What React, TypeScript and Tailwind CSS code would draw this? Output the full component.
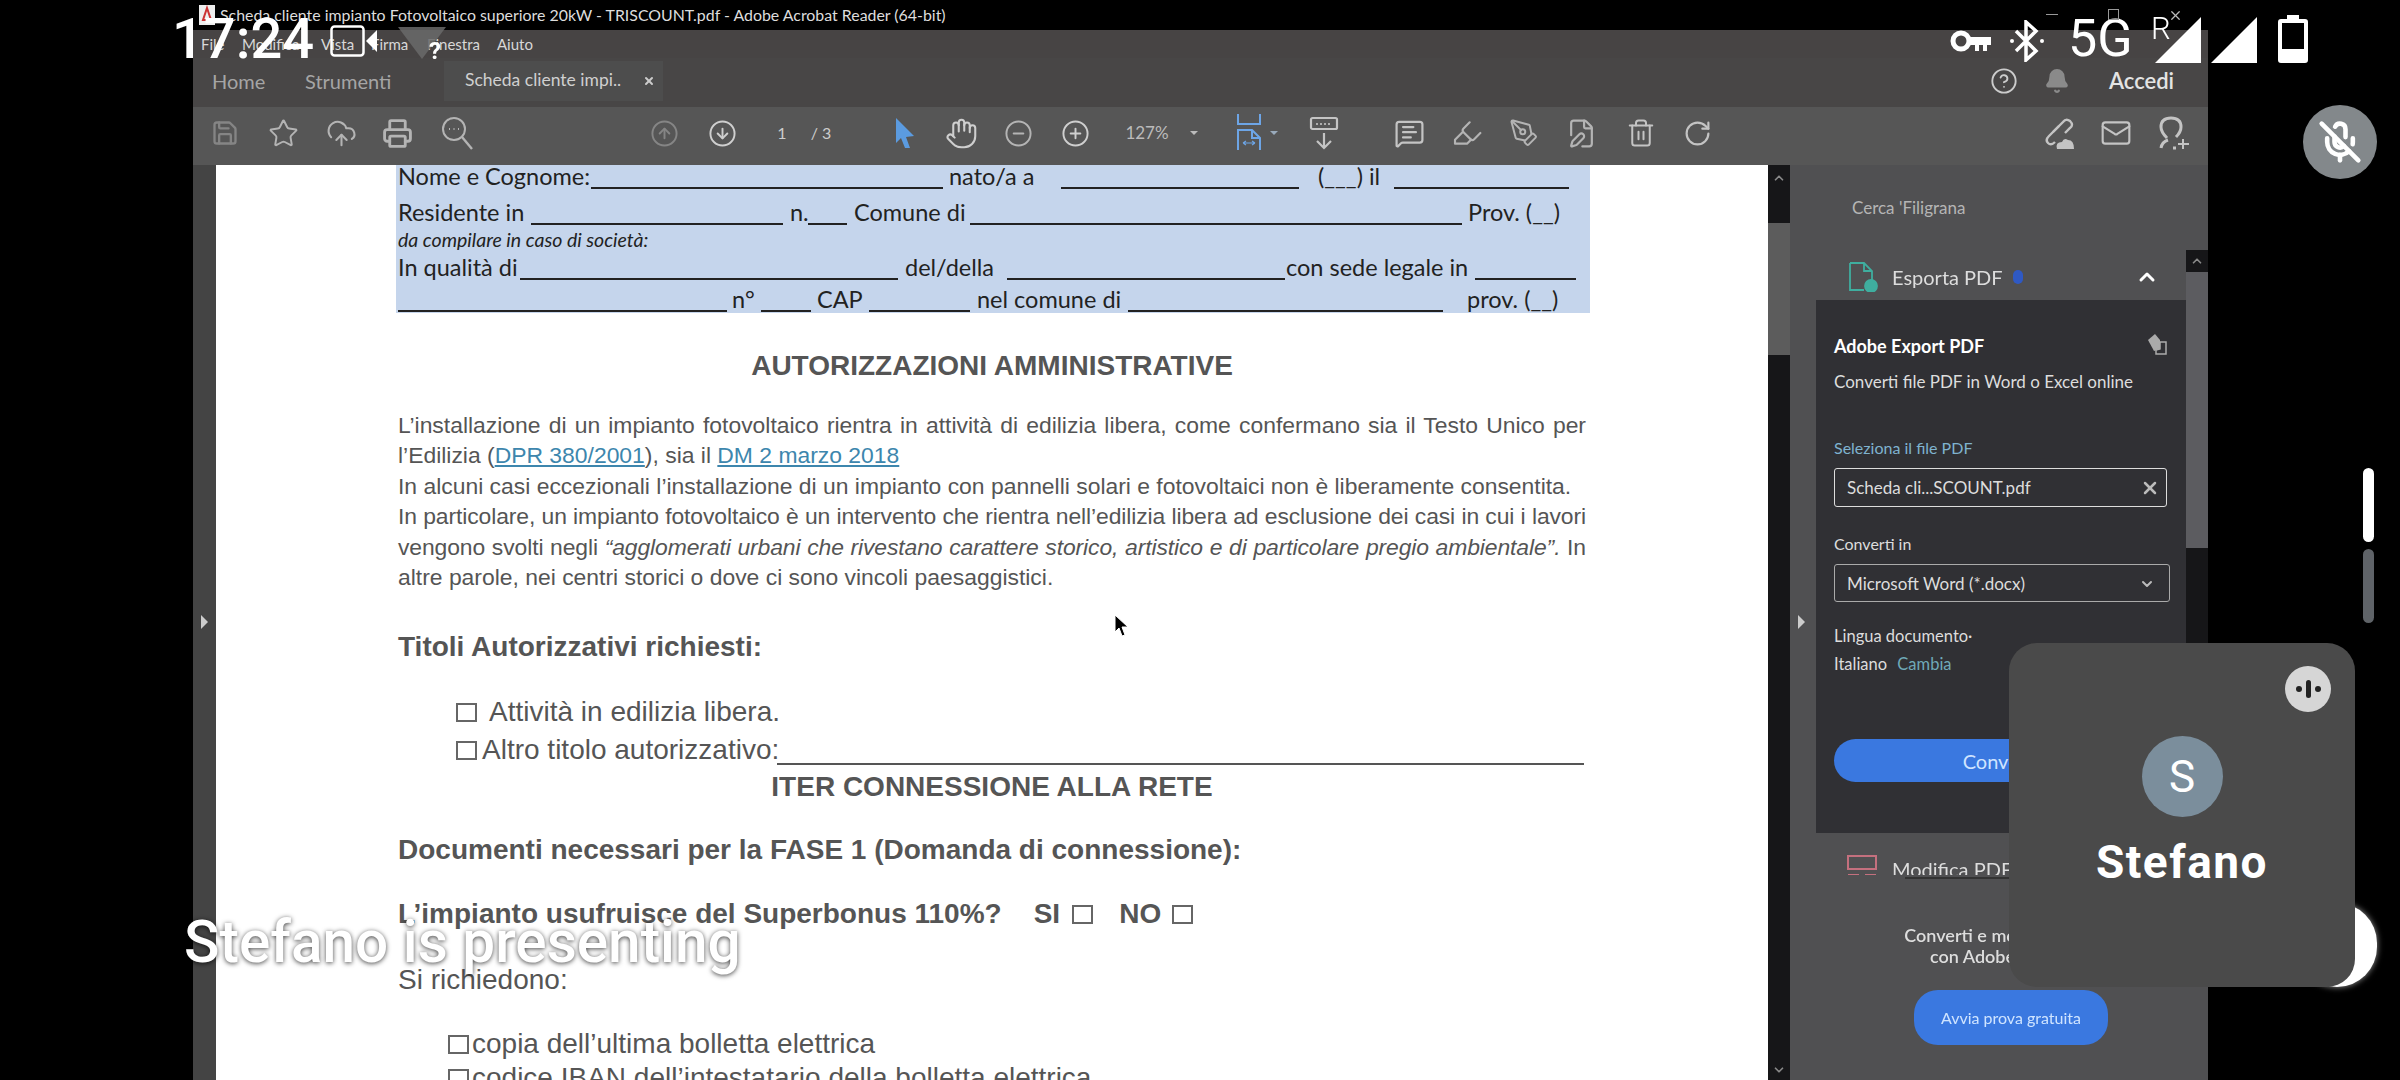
import type { ReactNode } from 'react'
import {
  Star, CloudUpload, Printer, CircleArrowUp, CircleArrowDown, Hand, CircleMinus, CirclePlus,
  MessageSquareText, Highlighter, PenTool, FilePen, Trash2, RotateCw, Mail, Save,
  ChevronUp, ChevronDown, X, CircleHelp, Bell, MicOff,
} from 'lucide-react'

const ui = "font-['Lato','Noto_Sans',sans-serif]"
const doc = "font-['Liberation_Sans',Arial,sans-serif]"

// slot centrato su una x del toolbar
function Slot({ className, children }: { className: string; children: ReactNode }) {
  return <div className={`flex h-full shrink-0 items-center justify-center ${className}`}>{children}</div>
}

function Box({ className = '' }: { className?: string }) {
  return <span className={`inline-block h-[19px] w-[21px] shrink-0 border-2 border-[#666] ${className}`} />
}

function Toolbar() {
  const ic = 'text-[#b4b4b4]'
  return (
    <div className="flex h-[58px] shrink-0 items-center bg-[#565656] pb-[6px] pl-[12px]">
      <Slot className="w-[40px] opacity-50"><Save size={28} className={ic} /></Slot>
      <Slot className="ml-[18px] w-[40px]"><Star size={31} strokeWidth={1.5} className={ic} /></Slot>
      <Slot className="ml-[18px] w-[40px]"><CloudUpload size={31} strokeWidth={1.6} className={ic} /></Slot>
      <Slot className="ml-[16px] w-[40px]"><Printer size={31} strokeWidth={2.2} className={ic} /></Slot>
      <Slot className="ml-[20px] w-[40px]">
        <svg width="32" height="34" viewBox="0 0 32 34" fill="none" stroke="#b4b4b4" strokeWidth="2">
          <circle cx="13" cy="13" r="11" />
          <path d="M21 21 L31 33" strokeWidth="2.4" />
          <path d="M8 13 h1 M12.500 13 h1 M17 13 h1" strokeWidth="2" />
        </svg>
      </Slot>
      <Slot className="ml-[167px] w-[40px] opacity-50"><CircleArrowUp size={29} strokeWidth={1.6} className={ic} /></Slot>
      <Slot className="ml-[18px] w-[40px]"><CircleArrowDown size={29} strokeWidth={1.6} className="text-[#cfcfcf]" /></Slot>
      <Slot className={`ml-[20px] w-[40px] text-[16px] text-[#ccc] ${ui}`}>1</Slot>
      <Slot className={`ml-[-1px] w-[40px] text-[16px] text-[#ccc] ${ui}`}>/ 3</Slot>
      <Slot className="ml-[44px] w-[40px]">
        <svg width="22" height="32" viewBox="0 0 22 32"><path d="M2 1 L20 19 L12 20 L16 31 L11 31 L7 21 L2 26 Z" fill="#5b9be0" /></svg>
      </Slot>
      <Slot className="ml-[16px] w-[40px]"><Hand size={33} strokeWidth={1.5} className="text-[#cfcfcf]" /></Slot>
      <Slot className="ml-[17px] w-[40px]"><CircleMinus size={29} strokeWidth={1.6} className={ic} /></Slot>
      <Slot className="ml-[17px] w-[40px]"><CirclePlus size={29} strokeWidth={1.6} className="text-[#cfcfcf]" /></Slot>
      <Slot className={`ml-[22px] w-[60px] text-[17px] text-[#bbb] ${ui}`}>127%</Slot>
      <Slot className="ml-[7px] w-[20px]"><span className="h-0 w-0 border-x-[4px] border-t-[4px] border-x-transparent border-t-[#bbb]" /></Slot>
      <Slot className="ml-[25px] w-[40px]">
        <svg width="26" height="38" viewBox="0 0 26 38" fill="none" stroke="#6da5e6" strokeWidth="2">
          <path d="M2 0 V10 H24 V0" />
          <path d="M2 36 V16 H16 L24 24 V36 M16 16 V24 H24" />
          <path d="M7 29 H19 M7 29 L10 27 M7 29 L10 31 M19 29 L16 27 M19 29 L16 31" strokeWidth="1.2" />
        </svg>
      </Slot>
      <Slot className="ml-[-3px] w-[16px]"><span className="h-0 w-0 border-x-[4px] border-t-[4px] border-x-transparent border-t-[#9ab]" /></Slot>
      <Slot className="ml-[22px] w-[40px]">
        <svg width="30" height="34" viewBox="0 0 30 34" fill="none" stroke="#c4c4c4" strokeWidth="2.2">
          <rect x="2" y="2" width="26" height="11" rx="1.5" />
          <path d="M8 7 v2 M12 7 v2 M16 7 v2 M20 7 v2" strokeWidth="1.6" />
          <path d="M15 17 V32 M8 25 L15 32 L22 25" />
        </svg>
      </Slot>
      <Slot className="ml-[45px] w-[40px]"><MessageSquareText size={31} strokeWidth={1.7} className="text-[#c4c4c4]" /></Slot>
      <Slot className="ml-[18px] w-[40px]"><Highlighter size={32} strokeWidth={1.6} className={ic} /></Slot>
      <Slot className="ml-[17px] w-[40px]"><PenTool size={30} strokeWidth={1.6} className={ic} /></Slot>
      <Slot className="ml-[17px] w-[40px]"><FilePen size={31} strokeWidth={1.7} className={ic} /></Slot>
      <Slot className="ml-[20px] w-[40px]"><Trash2 size={30} strokeWidth={1.6} className="text-[#c4c4c4]" /></Slot>
      <Slot className="ml-[16px] w-[40px]"><RotateCw size={29} strokeWidth={1.8} className="text-[#c4c4c4]" /></Slot>
      <Slot className="ml-[321px] w-[40px]">
        <svg width="34" height="36" viewBox="0 0 34 36" fill="none" stroke="#c4c4c4" strokeWidth="2.4">
          <path d="M12 17 L22 7 Q25 3 29 6 Q33 10 29 13 L24 18" />
          <path d="M18 11 L8 21 Q4 25 7 28 Q10 31 14 27" />
          <path d="M16 34 Q14 27 21 27 Q23 22 27 25 Q33 25 33 34 Z" fill="#c4c4c4" stroke="none" />
        </svg>
      </Slot>
      <Slot className="ml-[18px] w-[40px]"><Mail size={32} strokeWidth={1.6} className="text-[#c4c4c4]" /></Slot>
      <Slot className="ml-[18px] w-[40px]">
        <svg width="32" height="34" viewBox="0 0 32 34" fill="none" stroke="#c4c4c4" strokeWidth="3">
          <path d="M9 22 Q3 16 3 11 Q3 2 13 2 Q23 2 23 11 Q23 16 18 21" />
          <path d="M3 32 Q4 26 10 24 M15 32 H18" />
          <path d="M25 23 V33 M20 28 H31" strokeWidth="2" />
        </svg>
      </Slot>
    </div>
  )
}

function FormLine({ className }: { className: string }) {
  return <span className={`block h-[2px] shrink-0 self-end bg-[#222] ${className}`} />
}

function Highlighted() {
  const row = 'flex h-[24px] items-center whitespace-nowrap text-[23.5px] leading-none text-[#222]'
  return (
    <div className={`ml-[180px] w-[1194px] bg-[#c5d5ec] pb-[1px] pl-[2px] font-['Lato',sans-serif]`}>
      <div className={row}>
        <span className="w-[193px]">Nome e Cognome:</span><FormLine className="w-[352px]" />
        <span className="ml-[6px] w-[112px]">nato/a a</span><FormLine className="w-[238px]" />
        <span className="ml-[19px] w-[76px]">(___) il</span><FormLine className="w-[175px]" />
      </div>
      <div className={`mt-[12px] ${row}`}>
        <span className="w-[133px]">Residente in</span><FormLine className="w-[252px]" />
        <span className="ml-[7px] w-[18px]">n.</span><FormLine className="w-[39px]" />
        <span className="ml-[7px] w-[116px]">Comune di</span><FormLine className="w-[492px]" />
        <span className="ml-[6px]">Prov. (__)</span>
      </div>
      <div className={`mt-[3px] h-[24px] text-[19.5px] italic leading-[24px] text-[#222]`}>da compilare in caso di società:</div>
      <div className={`mt-[4px] ${row}`}>
        <span className="w-[122px]">In qualità di</span><FormLine className="w-[378px]" />
        <span className="ml-[7px] w-[102px]">del/della</span><FormLine className="w-[278px]" />
        <span className="ml-[1px] w-[189px]">con sede legale in</span><FormLine className="w-[101px]" />
      </div>
      <div className={`mt-[8px] ${row}`}>
        <FormLine className="w-[329px]" />
        <span className="ml-[5px] w-[29px]">n°</span><FormLine className="w-[50px]" />
        <span className="ml-[6px] w-[52px]">CAP</span><FormLine className="w-[101px]" />
        <span className="ml-[7px] w-[151px]">nel comune di</span><FormLine className="w-[315px]" />
        <span className="ml-[24px]">prov. (__)</span>
      </div>
    </div>
  )
}

function Page() {
  const para = 'ml-[182px] h-[30.4px] whitespace-nowrap text-[22.9px] leading-[30.4px] text-[#555]'
  const full = `${para} w-[1188px] [text-align-last:justify]`
  const head = 'h-[34px] whitespace-nowrap text-[28px] font-bold leading-[34px] text-[#555]'
  const item = 'flex h-[34px] items-center whitespace-nowrap text-[28px] leading-[34px] text-[#555]'
  return (
    <div className={`w-[1552px] shrink-0 overflow-hidden bg-white ${doc}`}>
      <Highlighted />
      <div className="mt-[37px] h-[32px] text-center text-[28px] font-bold leading-[32px] text-[#555]">AUTORIZZAZIONI AMMINISTRATIVE</div>
      <div className="mt-[28px]">
        <div className={full}>L’installazione di un impianto fotovoltaico rientra in attività di edilizia libera, come confermano sia il Testo Unico per</div>
        <div className={para}>
          l’Edilizia (<span className="text-[#3d86ad] underline">DPR 380/2001</span>), sia il <span className="text-[#3d86ad] underline">DM 2 marzo 2018</span>
        </div>
        <div className={`${para} w-[1171px] [text-align-last:justify]`}>In alcuni casi eccezionali l’installazione di un impianto con pannelli solari e fotovoltaici non è liberamente consentita.</div>
        <div className={`${full} tracking-[-0.1px]`}>In particolare, un impianto fotovoltaico è un intervento che rientra nell’edilizia libera ad esclusione dei casi in cui i lavori</div>
        <div className={`${full} tracking-[-0.1px]`}>vengono svolti negli <i>“agglomerati urbani che rivestano carattere storico, artistico e di particolare pregio ambientale”.</i> In</div>
        <div className={para}>altre parole, nei centri storici o dove ci sono vincoli paesaggistici.</div>
      </div>
      <div className={`ml-[182px] mt-[38px] ${head}`}>Titoli Autorizzativi richiesti:</div>
      <div className={`ml-[240px] mt-[31px] ${item}`}><Box /><span className="ml-[12px]">Attività in edilizia libera.</span></div>
      <div className={`ml-[240px] mt-[4px] ${item}`}>
        <Box /><span className="ml-[5px]">Altro titolo autorizzativo:</span>
        <span className="ml-[-2px] mt-[28px] h-[2px] w-[807px] bg-[#555]" />
      </div>
      <div className={`mt-[3px] text-center ${head}`}>ITER CONNESSIONE ALLA RETE</div>
      <div className={`ml-[182px] mt-[29px] ${head}`}>Documenti necessari per la FASE 1 (Domanda di connessione):</div>
      <div className={`ml-[182px] mt-[30px] flex items-center ${head}`}>
        L’impianto usufruisce del Superbonus 110%?
        <span className="ml-[32px]">SI</span><Box className="ml-[12px]" />
        <span className="ml-[26px]">NO</span><Box className="ml-[11px]" />
      </div>
      <div className="ml-[182px] mt-[32px] h-[34px] text-[28px] leading-[34px] text-[#555]">Si richiedono:</div>
      <div className={`ml-[232px] mt-[30px] ${item}`}><Box /><span className="ml-[3px]">copia dell’ultima bolletta elettrica</span></div>
      <div className={`ml-[232px] ${item}`}><Box /><span className="ml-[3px]">codice IBAN dell’intestatario della bolletta elettrica</span></div>
    </div>
  )
}

function SidePanel() {
  return (
    <div className={`flex min-w-0 flex-1 bg-[#505052] text-[#ddd] ${ui}`}>
      <div className="w-[396px] shrink-0">
        <div className="ml-[62px] mt-[31px] h-[24px] text-[17px] leading-[24px] text-[#b5b5b5]">Cerca 'Filigrana</div>
        <div className="mt-[42px] flex h-[30px] items-center pl-[58px]">
          <svg width="30" height="30" viewBox="0 0 30 30" fill="none" stroke="#3fae9f" strokeWidth="1.8">
            <path d="M2 1 H16 L24 9 V18 M2 1 V28 H16 M16 1 V9 H24" />
            <circle cx="23" cy="24" r="6" fill="#3fae9f" />
          </svg>
          <span className="ml-[14px] text-[20px] text-[#ddd]">Esporta PDF</span>
          <span className="ml-[10px] h-[14px] w-[10px] rounded-full bg-[#2f59c4]" />
          <ChevronUp size={24} strokeWidth={3} className="ml-[112px] text-white" />
        </div>
        <div className="relative ml-[26px] mt-[8px] h-[533px] w-[370px] bg-[#303034] pl-[18px] pt-[34px]">
          <svg className="absolute left-[331px] top-[33px]" width="20" height="22" viewBox="0 0 20 22" fill="#aaa">
            <path d="M1 7 L8 1 L13 7 V16 L7 18 Z" /><path d="M13 9 H19 V21 H9 V17 L13 16 Z" fill="none" stroke="#aaa" strokeWidth="1.5" />
          </svg>
          <div className="h-[24px] text-[18px] font-bold leading-[24px] text-white">Adobe Export PDF</div>
          <div className="mt-[12px] h-[24px] text-[17px] leading-[24px]">Converti file PDF in Word o Excel online</div>
          <div className="mt-[42px] h-[24px] text-[16px] leading-[24px] text-[#7fb3cf]">Seleziona il file PDF</div>
          <div className="mt-[8px] flex h-[39px] w-[333px] items-center justify-between rounded-[3px] border border-[#ddd] pl-[12px] pr-[6px] pt-[1px] text-[17px]">
            Scheda cli...SCOUNT.pdf <X size={20} strokeWidth={3} className="text-[#bbb]" />
          </div>
          <div className="mt-[25px] h-[24px] text-[16px] leading-[24px]">Converti in</div>
          <div className="mt-[8px] flex h-[38px] w-[336px] items-center justify-between rounded-[3px] border border-[#aaa] pl-[12px] pr-[14px] pt-[2px] text-[17px]">
            Microsoft Word (*.docx) <ChevronDown size={16} strokeWidth={3} className="text-[#bbb]" />
          </div>
          <div className="mt-[22px] h-[24px] text-[16.5px] leading-[24px]">Lingua documento·</div>
          <div className="mt-[4px] h-[24px] text-[16.5px] leading-[24px]">Italiano <span className="ml-[6px] text-[#6fa9b8]">Cambia</span></div>
          <div className="mt-[63px] flex h-[43px] w-[333px] items-center justify-center rounded-full bg-[#3a78e0] text-[20px] text-[#cfe4ff]">Converti</div>
        </div>
        <div className="mt-[22px] flex h-[20px] items-start overflow-hidden pl-[57px]">
          <svg width="30" height="22" viewBox="0 0 30 22" fill="none" stroke="#c4707e" strokeWidth="2">
            <rect x="1" y="1" width="28" height="13" /><path d="M1 20 H12 M18 20 H29" />
          </svg>
          <span className="ml-[15px] text-[20px] leading-[28px]">Modifica PDF</span>
        </div>
        <div className="ml-[115px] mt-[2px] h-[2px] w-[105px] bg-[#333]" />
        <div className="ml-[104px] mt-[46px] w-[224px] whitespace-nowrap text-center text-[18px] font-semibold leading-[21px]">
          Converti e modifica i PDF<br />con Adobe Acrobat
        </div>
        <div className="ml-[124px] mt-[23px] flex h-[55px] w-[194px] items-center justify-center rounded-[24px] bg-[#3a78e0] text-[16px] text-[#cfe4ff]">
          Avvia prova gratuita
        </div>
      </div>
      <div className="mt-[85px] w-[22px] shrink-0 self-start">
        <div className="flex h-[22px] items-center justify-center bg-[#161618]"><ChevronUp size={14} strokeWidth={3} className="text-[#888]" /></div>
        <div className="h-[276px] bg-[#5c5c60]" />
        <div className="h-[180px] bg-[#161618]" />
      </div>
    </div>
  )
}

function VideoFrame() {
  return (
    <div className="flex h-[1080px] w-[2015px] shrink-0 flex-col overflow-hidden blur-[0.5px]">
      <div className={`flex h-[30px] shrink-0 items-center bg-black pl-[6px] text-[15.9px] text-[#ddd] ${ui}`}>
        <svg width="16" height="20" viewBox="0 0 16 20"><rect width="16" height="20" fill="#eee" /><path d="M8 3 L12 15 L4 15 Z" fill="none" stroke="#c33" strokeWidth="2" /></svg>
        <span className="ml-[5px] whitespace-nowrap">Scheda cliente impianto Fotovoltaico superiore 20kW - TRISCOUNT.pdf - Adobe Acrobat Reader (64-bit)</span>
      </div>
      <div className={`flex h-[28px] shrink-0 items-center bg-[#474444] text-[15px] text-[#d8d8d8] ${ui}`}>
        <span className="ml-[8px] w-[41px]">File</span>
        <span className="w-[79px]">Modifica</span>
        <span className="w-[50px]">Vista</span>
        <span className="w-[56px]">Firma</span>
        <span className="w-[70px]">Finestra</span>
        <span>Aiuto</span>
      </div>
      <div className={`flex h-[49px] shrink-0 items-center bg-[#484646] pb-[4px] ${ui}`}>
        <span className="ml-[19px] w-[93px] text-[20px] text-[#a5a5a5]">Home</span>
        <span className="w-[139px] text-[20px] text-[#a5a5a5]">Strumenti</span>
        <div className="flex h-[40px] w-[219px] items-center justify-between bg-[#4d4d4d] pl-[21px] pr-[8px] text-[17.5px] text-[#d0d0d0]">
          Scheda cliente impi.. <X size={12} strokeWidth={4} className="text-[#ccc]" />
        </div>
        <CircleHelp size={28} strokeWidth={1.6} className="ml-[1327px] text-[#ccc]" />
        <Bell size={26} fill="#8a8a8a" className="ml-[26px] text-[#8a8a8a]" />
        <span className="ml-[39px] text-[22px] font-semibold text-[#e4e4e4]">Accedi</span>
      </div>
      <Toolbar />
      <div className="flex min-h-0 flex-1">
        <div className="relative w-[23px] shrink-0 bg-[#444]">
          <span className="absolute left-[8px] top-[450px] h-0 w-0 border-y-[7px] border-l-[7px] border-y-transparent border-l-[#ccc]" />
        </div>
        <Page />
        <div className="relative flex w-[22px] shrink-0 flex-col bg-[#161618]">
          <div className="flex h-[58px] justify-center pt-[6px]"><ChevronUp size={14} strokeWidth={3} className="text-[#888]" /></div>
          <div className="h-[132px] bg-[#5c5c5c]" />
          <ChevronDown size={14} strokeWidth={3} className="absolute bottom-[3px] left-[4px] text-[#888]" />
        </div>
        <div className="relative flex min-w-0 flex-1">
          <SidePanel />
          <span className="absolute left-[8px] top-[450px] h-0 w-0 border-y-[7px] border-l-[7px] border-y-transparent border-l-[#ccc]" />
        </div>
      </div>
    </div>
  )
}

function StatusBar() {
  return (
    <>
      <div className="absolute left-[172px] top-[11px] font-['Roboto',sans-serif] text-[56px] font-medium leading-[56px] text-white">17:24</div>
      <svg className="absolute left-[330px] top-[25px]" width="48" height="32" viewBox="0 0 48 32" fill="none">
        <rect x="1.5" y="1.5" width="32" height="29" rx="3" stroke="#fff" strokeWidth="2.5" />
        <path d="M36 16 L47 5 V27 Z" fill="#fff" />
      </svg>
      <svg className="absolute left-[398px] top-[27px]" width="48" height="32" viewBox="0 0 48 32"><path d="M0 0 H48 L24 32 Z" fill="#6a6a6a" fillOpacity="0.85" /></svg>
      <div className="absolute left-[429px] top-[39px] font-['Roboto',sans-serif] text-[24px] font-bold leading-[24px] text-white">?</div>

      <svg className="absolute left-[1950px] top-[29px]" width="41" height="24" viewBox="0 0 41 24" fill="none">
        <circle cx="11" cy="12" r="8" stroke="#fff" strokeWidth="5" />
        <path d="M19 8 H41 V16 H37 V22 H33 V16 H29 V22 H25 V16 H19 Z" fill="#fff" />
      </svg>
      <svg className="absolute left-[2009px] top-[20px]" width="36" height="42" viewBox="0 0 36 42" fill="none" stroke="#fff" strokeWidth="3.5">
        <path d="M7 11 L27 31 L17 40 V2 L27 11 L7 31" />
        <circle cx="3" cy="21" r="2" fill="#fff" stroke="none" /><circle cx="33" cy="21" r="2" fill="#fff" stroke="none" />
      </svg>
      <div className="absolute left-[2068px] top-[11px] font-['Roboto',sans-serif] text-[52px] leading-[56px] text-white">5G</div>
      <div className="absolute left-[2151px] top-[13px] font-['Roboto',sans-serif] text-[31px] font-light leading-[32px] text-white">R</div>
      <svg className="absolute left-[2155px] top-[17px]" width="46" height="46" viewBox="0 0 46 46"><path d="M46 0 V46 H0 Z" fill="#fff" /></svg>
      <svg className="absolute left-[2211px] top-[17px]" width="46" height="46" viewBox="0 0 46 46"><path d="M46 0 V46 H0 Z" fill="#fff" /></svg>
      <svg className="absolute left-[2278px] top-[15px]" width="30" height="48" viewBox="0 0 30 48">
        <path d="M9 0 H21 V4 H27 Q30 4 30 7 V45 Q30 48 27 48 H3 Q0 48 0 45 V7 Q0 4 3 4 H9 Z" fill="#fff" />
        <rect x="4" y="8" width="22" height="26" fill="#000" />
      </svg>
      <span className="absolute left-[2046px] top-[14px] h-[1px] w-[12px] bg-[#999]" />
      <span className="absolute left-[2108px] top-[9px] h-[11px] w-[11px] border border-[#999]" />
      <X size={15} className="absolute left-[2168px] top-[8px] text-[#bbb]" />
    </>
  )
}

function Overlays() {
  return (
    <>
      <svg className="absolute left-[1114px] top-[614px]" width="16" height="24" viewBox="0 0 16 24">
        <path d="M1 1 L1 18 L5 14 L8 22 L11 21 L8 13 L14 13 Z" fill="#000" stroke="#fff" strokeWidth="1" />
      </svg>
      <div className="absolute left-[184px] top-[912px] whitespace-nowrap font-['Roboto',sans-serif] text-[58.5px] font-medium leading-[60px] text-white [text-shadow:0_1px_5px_rgba(0,0,0,0.75)]">
        Stefano is presenting
      </div>
      <div className="absolute left-[2303px] top-[105px] flex h-[74px] w-[74px] items-center justify-center rounded-full bg-[#83888b]">
        <MicOff size={44} strokeWidth={2.5} className="text-white" />
      </div>
      <span className="absolute left-[2363px] top-[468px] h-[74px] w-[11px] rounded-full bg-white" />
      <span className="absolute left-[2363px] top-[549px] h-[74px] w-[11px] rounded-full bg-[#5f6368]" />
      <span className="absolute left-[2297px] top-[903px] h-[84px] w-[80px] rounded-full bg-white shadow-[0_0_6px_rgba(255,255,255,0.6)]" />
      <div className="absolute left-[2009px] top-[643px] flex h-[344px] w-[346px] flex-col items-center rounded-[28px] bg-[#4a4a4a] font-['Roboto',sans-serif]">
        <div className="mr-[-252px] mt-[23px] flex h-[46px] w-[46px] items-center justify-center gap-[4px] rounded-full bg-[#d6d6d6]">
          <span className="h-[6px] w-[6px] rounded-full bg-[#222]" />
          <span className="h-[18px] w-[5px] rounded-full bg-[#222]" />
          <span className="h-[6px] w-[6px] rounded-full bg-[#222]" />
        </div>
        <div className="mt-[24px] flex h-[81px] w-[81px] items-center justify-center rounded-full bg-[#7b8e9c] text-[44px] text-white">S</div>
        <div className="mt-[24px] text-[46px] font-bold leading-[42px] tracking-[1.5px] text-white">Stefano</div>
      </div>
    </>
  )
}

export default function App() {
  return (
    <div className="relative flex h-[1080px] w-[2400px] overflow-hidden bg-black">
      <div className="w-[193px] shrink-0" />
      <VideoFrame />
      <StatusBar />
      <Overlays />
    </div>
  )
}
